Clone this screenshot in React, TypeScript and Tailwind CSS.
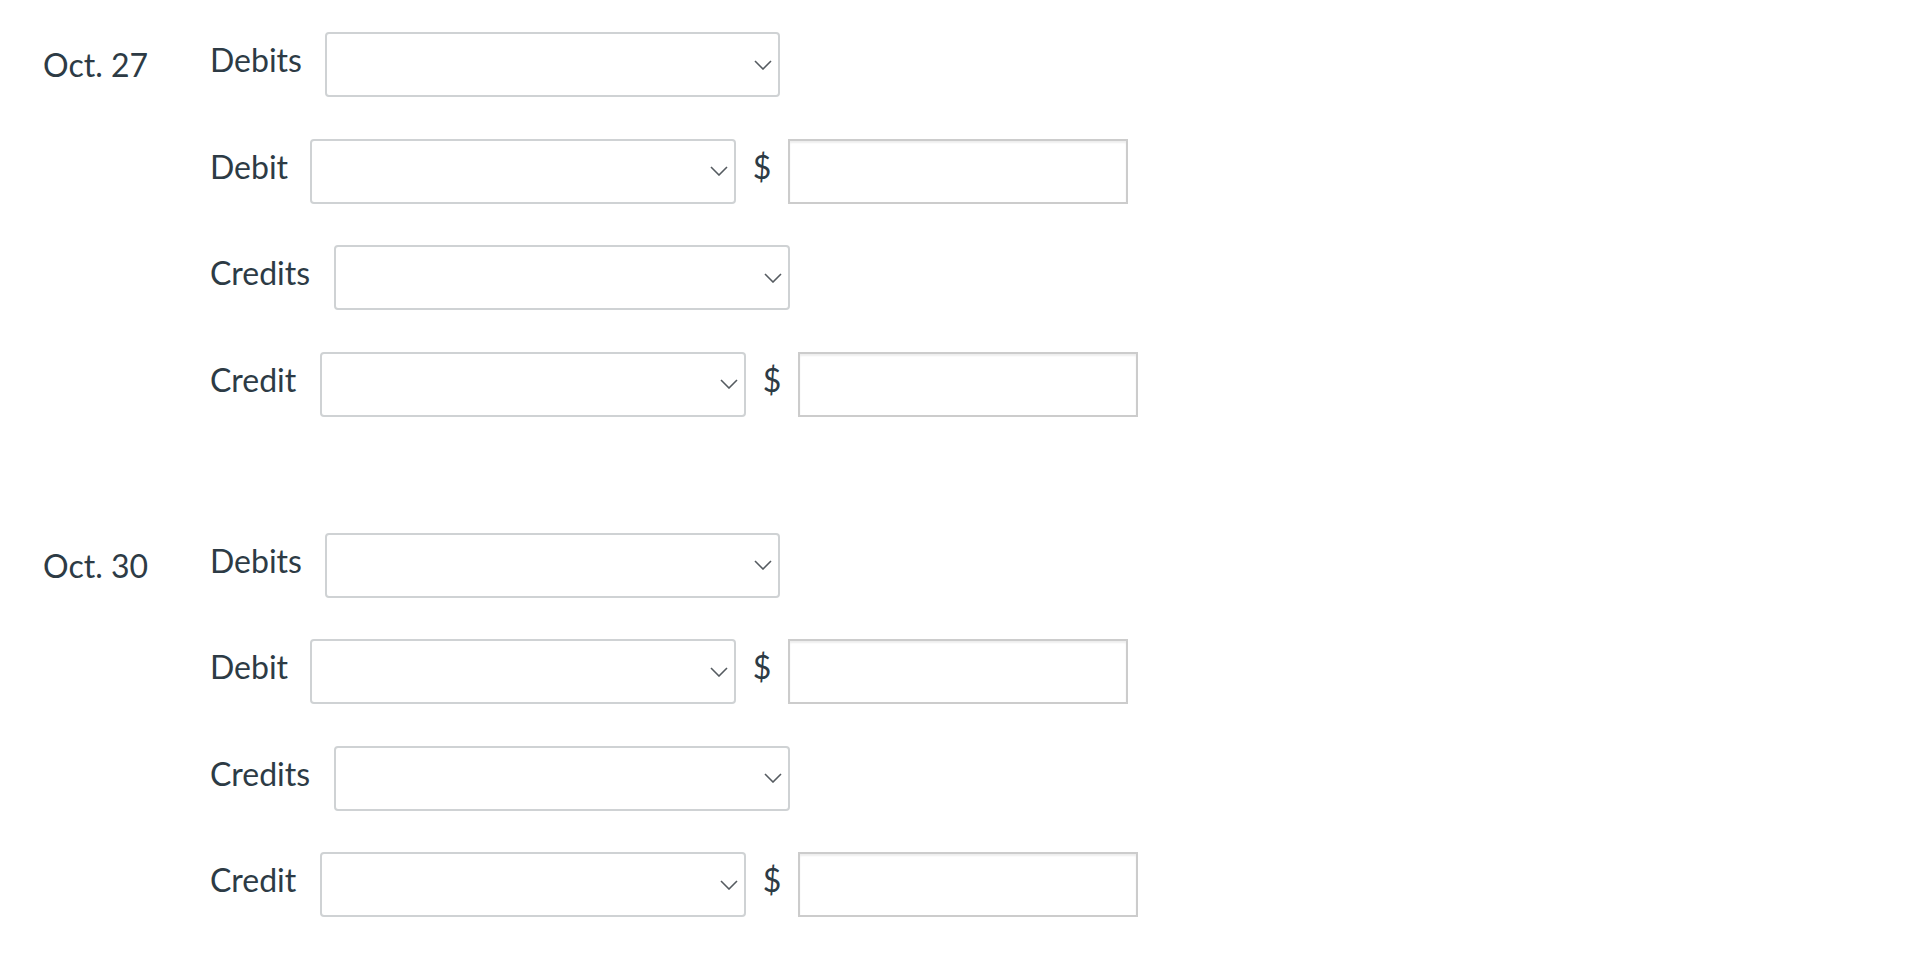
import React from "react";

const font = { fontFamily: "Lato, 'Open Sans', sans-serif" };

function Chevron() {
  return (
    <svg
      className="pointer-events-none absolute right-[8px] top-1/2 -translate-y-1/2"
      width="18"
      height="10"
      viewBox="0 0 18 10"
      fill="none"
    >
      <path d="M1 1 L9 9 L17 1" stroke="#555b60" strokeWidth="1.6" />
    </svg>
  );
}

function Select({ w }: { w: string }) {
  return (
    <div className={`relative h-[65px] ${w}`}>
      <select
        className="h-full w-full appearance-none rounded-[4px] border-2 border-[#cfd2d4] bg-white outline-none"
        defaultValue=""
      >
        <option value=""></option>
      </select>
      <Chevron />
    </div>
  );
}

function Amount() {
  return (
    <>
      <span className="mt-[9px] w-[52px] self-start text-center text-[32px] leading-[38px] text-[#2d3b45]">$</span>
      <input
        type="text"
        className="h-[65px] w-[340px] border-2 border-[#cccccc] bg-white shadow-[inset_0_2px_2px_rgba(0,0,0,0.07)] outline-none"
      />
    </>
  );
}

function Row({
  label,
  selectW,
  amount,
  labelW,
}: {
  label: string;
  selectW: string;
  amount?: boolean;
  labelW: string;
}) {
  return (
    <div className="flex h-[65px] items-start">
      <span className={`mt-[9px] shrink-0 text-[32px] leading-[38px] text-[#2d3b45] ${labelW}`}>{label}</span>
      <Select w={selectW} />
      {amount && <Amount />}
    </div>
  );
}

function Group({ date }: { date: string }) {
  return (
    <div className="flex">
      <div className="w-[167px] shrink-0">
        <div className="mt-[14px] text-[32px] leading-[38px] text-[#2d3b45]">{date}</div>
      </div>
      <div className="flex flex-col gap-[41.5px]">
        <Row label="Debits" selectW="w-[455px]" labelW="w-[115px]" />
        <Row label="Debit" selectW="w-[426px]" amount labelW="w-[100px]" />
        <Row label="Credits" selectW="w-[456px]" labelW="w-[124px]" />
        <Row label="Credit" selectW="w-[426px]" amount labelW="w-[110px]" />
      </div>
    </div>
  );
}

export default function App() {
  return (
    <div className="min-h-[954px] w-full bg-white pl-[43px] pt-[32px]" style={font}>
      <div className="flex flex-col gap-[116px]">
        <Group date="Oct. 27" />
        <Group date="Oct. 30" />
      </div>
    </div>
  );
}
